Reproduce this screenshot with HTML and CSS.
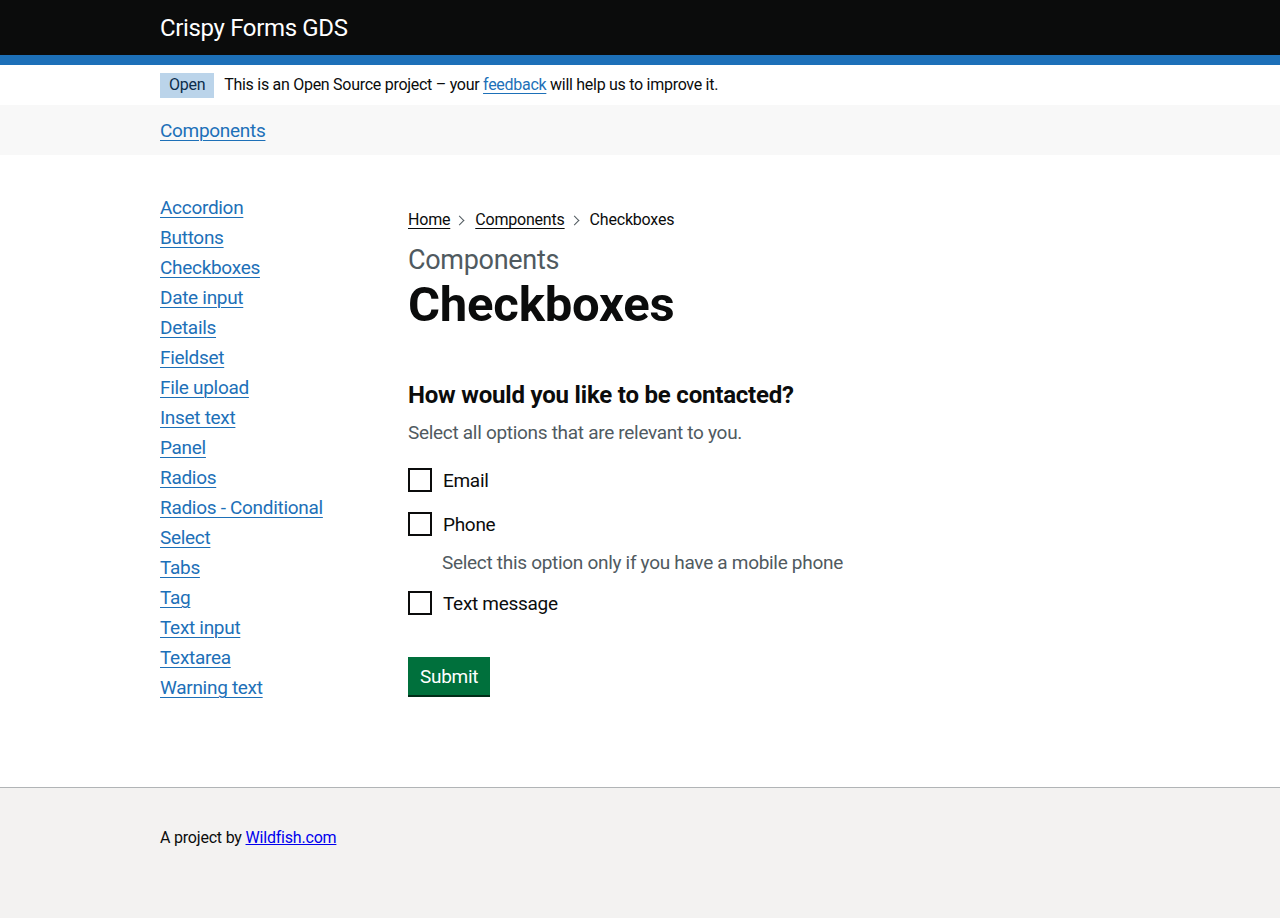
FILE: index.html
```html
<!DOCTYPE html>
<html lang="en">
<head>
<meta charset="utf-8">
<title>Checkboxes - Crispy Forms GDS</title>
<link rel="stylesheet" href="styles.css">
</head>
<body>
<header class="header">
  <div class="container header-inner">
    <a class="header-title" href="#">Crispy Forms GDS</a>
  </div>
</header>
<div class="container phase">
  <strong class="tag">Open</strong>
  <span class="phase-text">This is an Open Source project – your <a class="link" href="#">feedback</a> will help us to improve it.</span>
</div>
<nav class="topnav">
  <div class="container">
    <a class="link topnav-link" href="#">Components</a>
  </div>
</nav>
<div class="container main">
  <aside class="sidebar">
    <ul class="side-list">
      <li><a class="link" href="#">Accordion</a></li>
      <li><a class="link" href="#">Buttons</a></li>
      <li><a class="link" href="#">Checkboxes</a></li>
      <li><a class="link" href="#">Date input</a></li>
      <li><a class="link" href="#">Details</a></li>
      <li><a class="link" href="#">Fieldset</a></li>
      <li><a class="link" href="#">File upload</a></li>
      <li><a class="link" href="#">Inset text</a></li>
      <li><a class="link" href="#">Panel</a></li>
      <li><a class="link" href="#">Radios</a></li>
      <li><a class="link" href="#">Radios - Conditional</a></li>
      <li><a class="link" href="#">Select</a></li>
      <li><a class="link" href="#">Tabs</a></li>
      <li><a class="link" href="#">Tag</a></li>
      <li><a class="link" href="#">Text input</a></li>
      <li><a class="link" href="#">Textarea</a></li>
      <li><a class="link" href="#">Warning text</a></li>
    </ul>
  </aside>
  <main class="content">
    <ol class="breadcrumbs">
      <li><a class="crumb-link" href="#">Home</a></li>
      <li class="crumb-sep"><a class="crumb-link" href="#">Components</a></li>
      <li class="crumb-sep">Checkboxes</li>
    </ol>
    <span class="caption">Components</span>
    <h1 class="title">Checkboxes</h1>
    <form class="form">
      <fieldset class="fieldset">
        <legend class="legend">How would you like to be contacted?</legend>
        <div class="hint">Select all options that are relevant to you.</div>
        <div class="checkboxes">
          <div class="cb-item">
            <span class="cb-box"></span>
            <label class="cb-label">Email</label>
          </div>
          <div class="cb-item">
            <span class="cb-box"></span>
            <label class="cb-label">Phone</label>
          </div>
          <div class="cb-hint">Select this option only if you have a mobile phone</div>
          <div class="cb-item">
            <span class="cb-box"></span>
            <label class="cb-label">Text message</label>
          </div>
        </div>
      </fieldset>
      <button class="button" type="button">Submit</button>
    </form>
  </main>
</div>
<footer class="footer">
  <div class="container">
    <p class="footer-text">A project by <a class="footer-link" href="#">Wildfish.com</a></p>
  </div>
</footer>
</body>
</html>
```
FILE: styles.css
```css
* { box-sizing: border-box; }
html, body { margin: 0; padding: 0; }
body {
  font-family: Roboto, "Liberation Sans", sans-serif;
  color: #0b0c0c;
  background: #fff;
  font-size: 19px;
  line-height: 25px;
  letter-spacing: -0.3px;
}
.container { width: 960px; margin: 0 auto; }
.link { color: #1d70b8; text-decoration: underline; text-underline-offset: 3px; text-decoration-thickness: 1px; }

.header { background: #0b0c0c; border-bottom: 10px solid #1d70b8; }
.header-inner { height: 55px; display: flex; align-items: center; }
.header-title { color: #fff; text-decoration: none; font-size: 24px; line-height: 30px; letter-spacing: -0.35px; }

.phase { height: 40px; display: flex; align-items: center; font-size: 16px; line-height: 20px; letter-spacing: -0.28px; }
.tag { background: #bbd4ea; color: #0c2d4a; font-weight: 400; padding: 2px 9px 3px; line-height: 20px; margin-right: 10px; }
.phase-text { color: #0b0c0c; }

.topnav { background: #f8f8f8; height: 50px; }
.topnav .container { height: 50px; display: flex; align-items: center; }
.topnav-link { font-size: 19px; }

.main { display: grid; grid-template-columns: 248px 1fr; padding-top: 40px; padding-bottom: 87px; }
.side-list { list-style: none; margin: 0; padding: 0; display: flex; flex-direction: column; gap: 5px; }
.side-list li { line-height: 25px; }

.breadcrumbs { list-style: none; margin: 15px 0 10px; padding: 0; display: flex; font-size: 16px; line-height: 20px; letter-spacing: -0.2px; }
.breadcrumbs li { display: flex; align-items: center; }
.crumb-sep::before {
  content: "";
  width: 6px; height: 6px;
  border-top: 1px solid #505a5f; border-right: 1px solid #505a5f;
  transform: rotate(45deg);
  margin: 0 12px 0 6px;
}
.crumb-link { color: #0b0c0c; text-decoration: underline; text-underline-offset: 3px; }

.caption { display: block; padding-top: 5px; color: #505a5f; font-size: 27px; line-height: 30px; }
.title { margin: 5px 0 50px; font-size: 49px; line-height: 50px; font-weight: 700; letter-spacing: -0.2px; }

.fieldset { border: 0; margin: 0; padding: 0; }
.legend { padding: 0; margin: 10px 0 10px; font-size: 24px; line-height: 30px; font-weight: 700; letter-spacing: -0.2px; }
.hint { color: #505a5f; margin-bottom: 23px; }
.checkboxes { display: flex; flex-direction: column; }
.cb-item { display: flex; align-items: center; gap: 11px; height: 24px; margin-bottom: 20px; }
.cb-box { width: 24px; height: 24px; border: 2px solid #0b0c0c; background: #fff; flex: none; }
.cb-label { line-height: 25px; }
.cb-hint { color: #505a5f; margin: -6px 0 16px 34px; }
.button {
  margin-top: 22px;
  font-family: inherit; font-size: 19px; line-height: 25px; letter-spacing: -0.3px;
  background: #00703c; color: #fff; border: 0;
  padding: 7px 12px 6px;
  box-shadow: 0 2px 0 #002d18;
}

.footer { background: #f3f2f1; border-top: 1px solid #b1b4b6; height: 131px; }
.footer-text { margin: 0; padding-top: 40px; font-size: 16px; line-height: 20px; letter-spacing: -0.2px; }
.footer-link { color: #0000ee; }
```
